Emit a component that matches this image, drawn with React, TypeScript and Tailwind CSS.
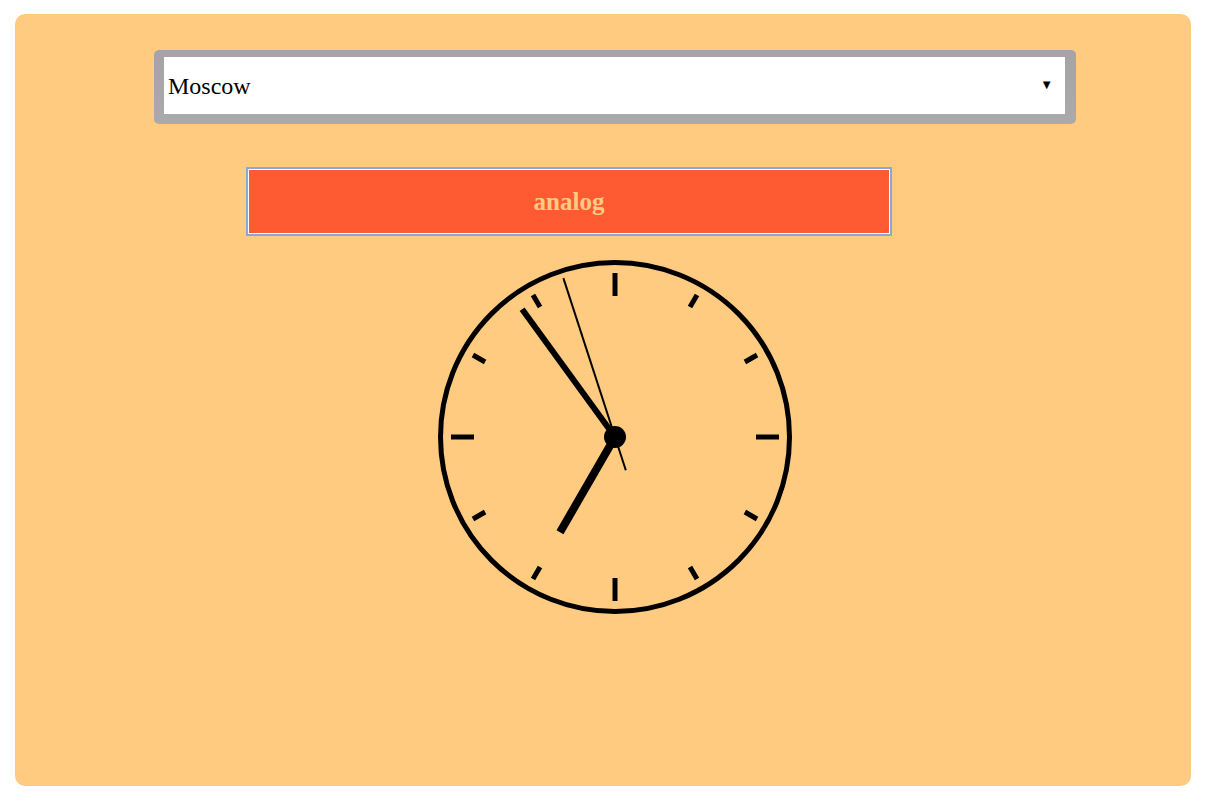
import React from "react";

const cx = 180;
const cy = 180;

function Tick({ i }: { i: number }) {
  const long = i % 3 === 0;
  const a = (i * 30 * Math.PI) / 180;
  const r1 = long ? 141 : 150;
  const r2 = 164;
  return (
    <line
      x1={cx + Math.sin(a) * r1}
      y1={cy - Math.cos(a) * r1}
      x2={cx + Math.sin(a) * r2}
      y2={cy - Math.cos(a) * r2}
      stroke="#000"
      strokeWidth={5}
    />
  );
}

function Hand({ deg, len, tail, w }: { deg: number; len: number; tail: number; w: number }) {
  const a = (deg * Math.PI) / 180;
  return (
    <line
      x1={cx - Math.sin(a) * tail}
      y1={cy + Math.cos(a) * tail}
      x2={cx + Math.sin(a) * len}
      y2={cy - Math.cos(a) * len}
      stroke="#000"
      strokeWidth={w}
    />
  );
}

export default function App() {
  return (
    <div className="w-[1221px] h-[808px] bg-white pt-[14px] pl-[15px]" style={{ fontFamily: '"Liberation Serif", serif' }}>
      <div className="w-[1176px] h-[772px] rounded-[10px] bg-[#ffcb80] pt-[36px] flex flex-col">
        <div className="ml-[139px] w-[922px] h-[74px] rounded-[5px] bg-gradient-to-b from-[#a4a4a4] to-[#aaaaaa] pt-[7px] pb-[10px] pl-[10px] pr-[11px]">
          <div className="h-full bg-white flex items-center pl-[4px] pr-[12px] justify-between">
            <span className="text-[24px] text-black leading-none">Moscow</span>
            <span className="text-[13px] text-black leading-none -mt-[3px]">▼</span>
          </div>
        </div>
        <div className="ml-[231px] mt-[43px] w-[646px] h-[69px] border-2 border-[#86a8dc] p-0">
          <div className="h-full border border-white bg-[#ff5b33] flex items-center justify-center">
            <span className="text-[25px] font-bold text-[#ffcb80] leading-none">analog</span>
          </div>
        </div>
        <div className="ml-[420px] mt-[21px] w-[360px] h-[360px]">
          <svg width="360" height="360" viewBox="0 0 360 360">
            <circle cx={cx} cy={cy} r={174.5} fill="none" stroke="#000" strokeWidth={5} />
            {Array.from({ length: 12 }).map((_, i) => (
              <Tick key={i} i={i} />
            ))}
            <Hand deg={210} len={110} tail={0} w={8} />
            <Hand deg={324} len={158} tail={0} w={6} />
            <Hand deg={342} len={167} tail={35} w={2} />
            <circle cx={cx} cy={cy} r={11} fill="#000" />
          </svg>
        </div>
      </div>
    </div>
  );
}
